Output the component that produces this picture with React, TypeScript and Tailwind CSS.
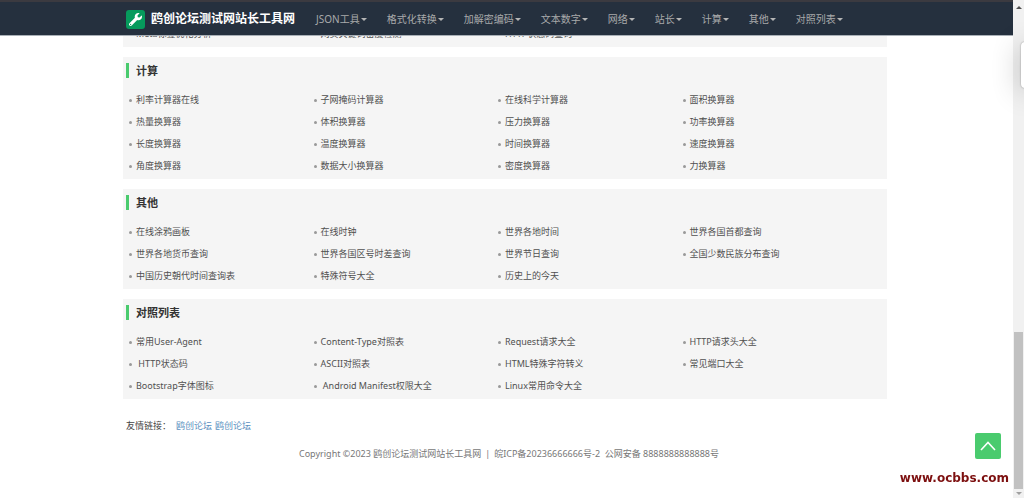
import { FaWrench } from "react-icons/fa";

const navItems = [
  "JSON工具",
  "格式化转换",
  "加解密编码",
  "文本数字",
  "网络",
  "站长",
  "计算",
  "其他",
  "对照列表",
];

const sections = [
  {
    title: "计算",
    links: [
      "利率计算器在线", "子网掩码计算器", "在线科学计算器", "面积换算器",
      "热量换算器", "体积换算器", "压力换算器", "功率换算器",
      "长度换算器", "温度换算器", "时间换算器", "速度换算器",
      "角度换算器", "数据大小换算器", "密度换算器", "力换算器",
    ],
  },
  {
    title: "其他",
    links: [
      "在线涂鸦画板", "在线时钟", "世界各地时间", "世界各国首都查询",
      "世界各地货币查询", "世界各国区号时差查询", "世界节日查询", "全国少数民族分布查询",
      "中国历史朝代时间查询表", "特殊符号大全", "历史上的今天",
    ],
  },
  {
    title: "对照列表",
    links: [
      "常用User-Agent", "Content-Type对照表", "Request请求大全", "HTTP请求头大全",
      " HTTP状态码", "ASCII对照表", "HTML特殊字符转义", "常见端口大全",
      "Bootstrap字体图标", " Android Manifest权限大全", "Linux常用命令大全",
    ],
  },
];

function Header() {
  return (
    <header className="fixed inset-x-0 top-0 z-10 h-9 border-t-2 border-b border-t-[#3b3a40] border-b-[#a9b0b7] bg-[#25303e] pr-[14px]">
      <div className="mx-auto flex h-full max-w-[764px] items-center pt-px pl-[3px]">
        <a href="#" className="flex items-center gap-[6px] whitespace-nowrap text-[12px] font-bold text-white">
          <span className="flex h-[19px] w-[19px] items-center justify-center rounded-[3px] bg-[#069a5c]">
            <FaWrench className="h-[13px] w-[13px]" />
          </span>
          鸥创论坛测试网站长工具网
        </a>
        <nav className="ml-[11px] flex">
          {navItems.map((item) => (
            <button key={item} className="flex items-center gap-px whitespace-nowrap px-[10px] text-[10px] text-[#a9aaab]">
              {item}
              <span className="border-x-3 border-t-3 border-x-transparent border-t-[#b5b5b5]" />
            </button>
          ))}
        </nav>
      </div>
    </header>
  );
}

function LinkGrid({ links }: { links: string[] }) {
  return (
    <ul className="grid grid-cols-4 pr-[20px] pb-[2px] pl-[6px]">
      {links.map((link) => (
        <li key={link} className="flex h-[22px] items-center gap-1">
          <span className="h-[3px] w-[3px] rounded-full bg-[#999]" />
          <a href="#" className="whitespace-pre text-[9px] text-[#505050]">
            {link}
          </a>
        </li>
      ))}
    </ul>
  );
}

function Section({ title, links }: { title: string; links: string[] }) {
  return (
    <section className="bg-[#f5f5f5]">
      <div className="flex h-8 items-start pt-[6px] pl-[3px]">
        <h2 className="border-l-3 border-[#4acb6e] pt-px pl-[7px] text-[11px] leading-[14px] font-bold text-[#333]">{title}</h2>
      </div>
      <LinkGrid links={links} />
    </section>
  );
}

// right hand scroll track
function ScrollTrack() {
  return (
    <div className="fixed inset-y-0 right-0 z-20 flex w-[11px] flex-col items-center bg-[#f1f1f1] pt-[6px] pb-[3px]">
      <span className="border-x-3 border-b-3 border-x-transparent border-b-[#505050]" />
      <div className="flex-[322]" />
      <div className="w-[9px] flex-[156] bg-[#c1c1c1]" />
      <span className="mt-[3px] border-x-3 border-t-3 border-x-transparent border-t-[#a0a0a0]" />
    </div>
  );
}

export default function App() {
  return (
    <div className="min-h-screen bg-white font-['Noto_Sans','Noto_Sans_CJK_SC',sans-serif]">
      <Header />
      <main className="pt-[23px] pr-[14px]">
        <div className="mx-auto flex max-w-[764px] flex-col gap-[10px]">
          <section className="bg-[#f5f5f5]">
            <LinkGrid links={["Meta标签优化分析", "网页关键词密度检测", "HTTP状态码查询"]} />
          </section>
          {sections.map((s) => (
            <Section key={s.title} title={s.title} links={s.links} />
          ))}
          <div className="flex gap-[3px] pt-[9px] pl-[3px] text-[9px] leading-4 text-[#444]">
            <span className="mr-[2px]">友情链接：</span>
            <a href="#" className="text-[#5a8fc0]">鸥创论坛</a>
            <a href="#" className="text-[#5a8fc0]">鸥创论坛</a>
          </div>
        </div>
      </main>
      <footer className="flex justify-center gap-1 pt-3 pr-[6px] pb-6 text-[9px] leading-4 text-[#777]">
        <span>Copyright ©2023 鸥创论坛测试网站长工具网</span>
        <span>|</span>
        <a href="#">皖ICP备20236666666号-2&nbsp; 公网安备 8888888888888号</a>
      </footer>
      <a
        href="#"
        aria-label="返回顶部"
        className="fixed right-[23px] bottom-[39px] flex h-[26px] w-[26px] items-center justify-center rounded-[2px] bg-[#4acb6e]"
      >
        <svg viewBox="0 0 16 10" className="h-[10px] w-4" fill="none" stroke="#fff" strokeWidth="1.6">
          <path d="M1 9 8 1.5 15 9" />
        </svg>
      </a>
      <span className="fixed right-[15px] bottom-3 font-['DejaVu_Sans',sans-serif] text-[12px] leading-4 font-bold text-[#7d1010]">
        www.ocbbs.com
      </span>
      <ScrollTrack />
      <div className="fixed top-[42px] -right-[9px] z-30 h-[46px] w-3 rounded-[4px] bg-white shadow-[0_4px_28px_rgba(0,0,0,0.3),0_0_2px_rgba(0,0,0,0.4)]" />
    </div>
  );
}
